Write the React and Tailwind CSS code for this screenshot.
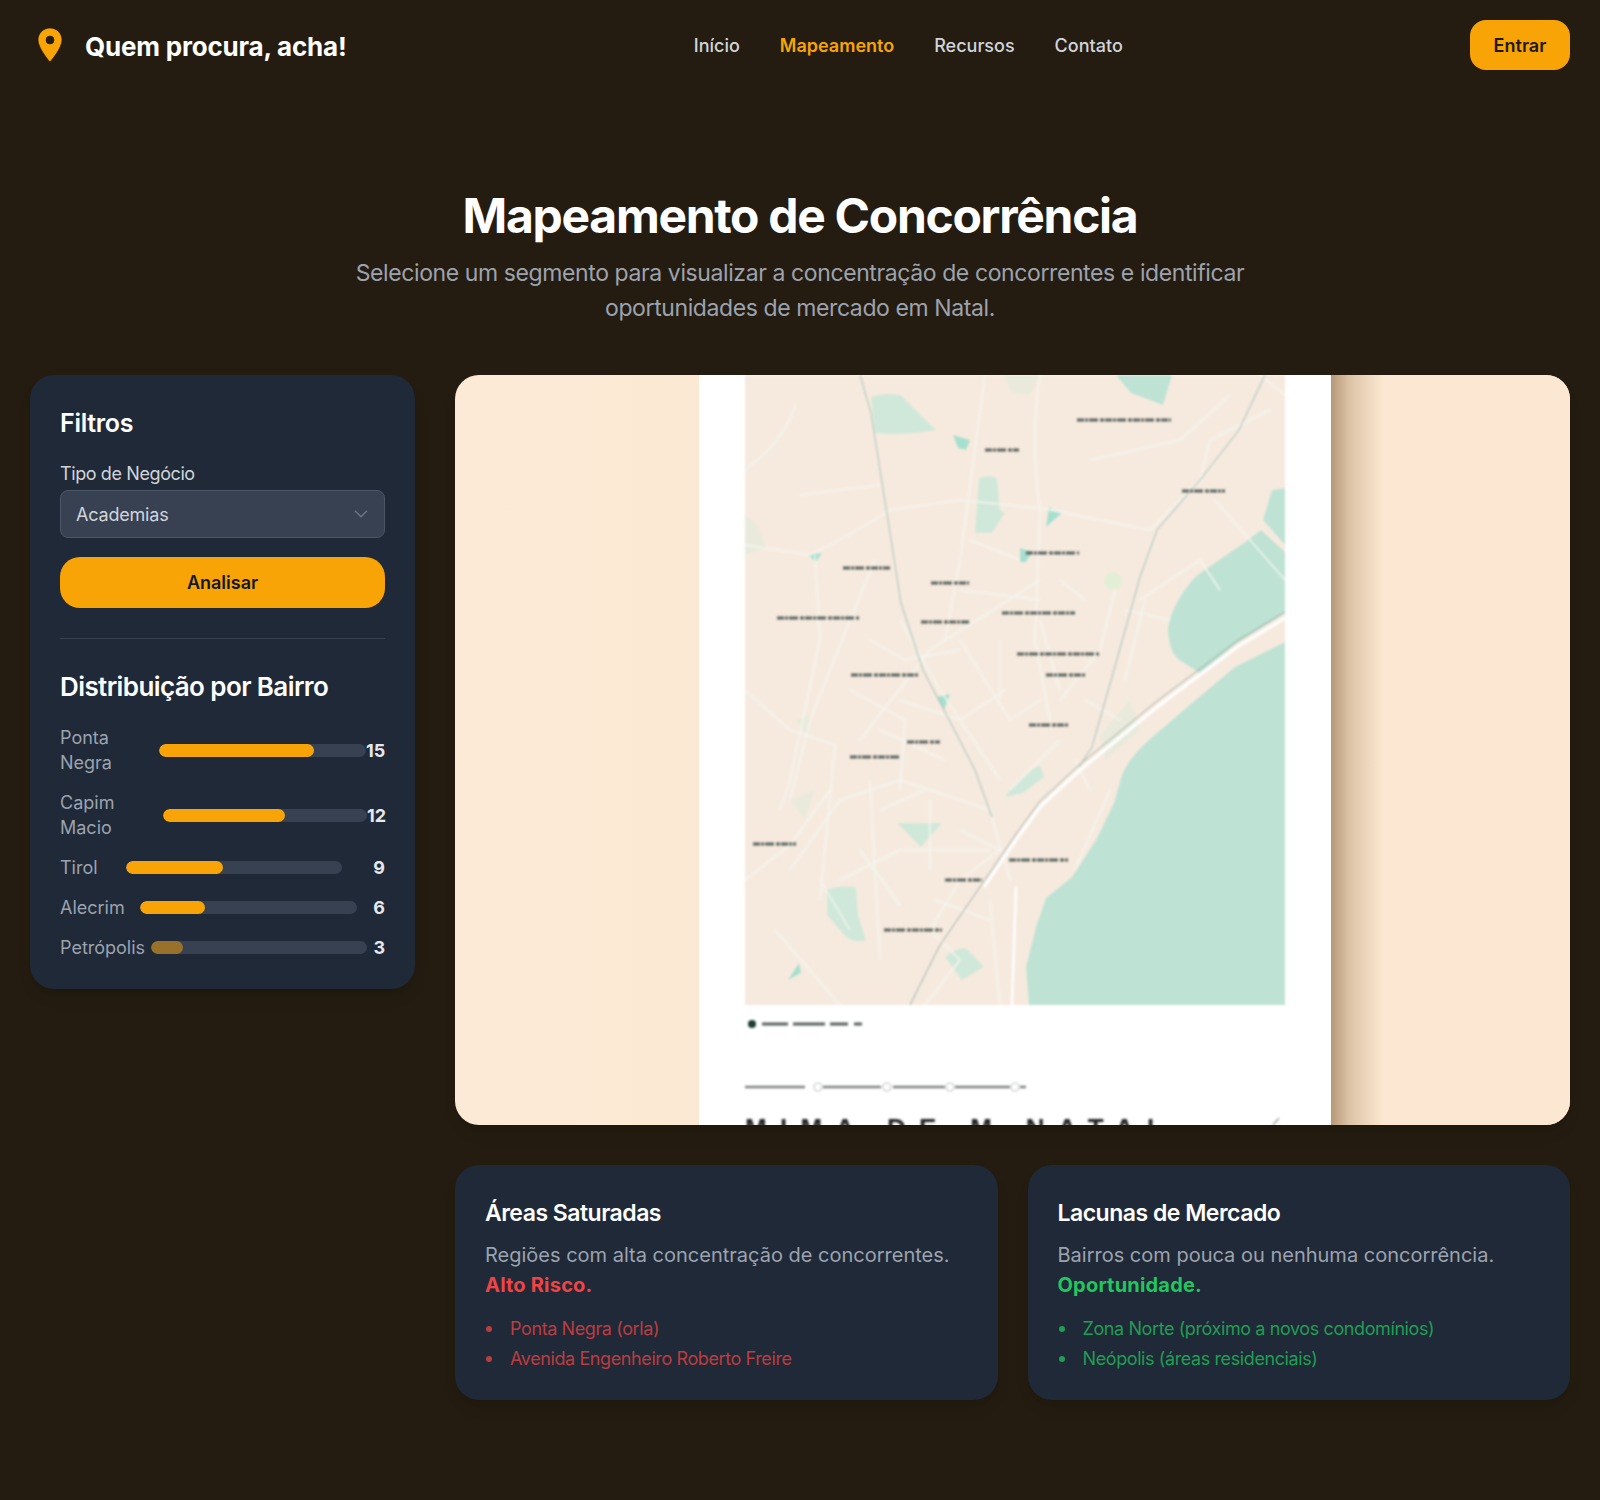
import { ChevronDown } from 'lucide-react'

const NAV = ['Início', 'Mapeamento', 'Recursos', 'Contato']

// widths are per row: the labels wrap differently and each bar starts after its label
const BAIRROS = [
  { name: 'Ponta Negra', count: 15, pct: 75, labelW: 'w-[93px]', barW: 'w-[207px]' },
  { name: 'Capim Macio', count: 12, pct: 60, labelW: 'w-[97px]', barW: 'w-[204px]' },
  { name: 'Tirol', count: 9, pct: 45, labelW: 'w-[60px]', barW: 'w-[216px]' },
  { name: 'Alecrim', count: 6, pct: 30, labelW: 'w-[74px]', barW: 'w-[217px]' },
  { name: 'Petrópolis', count: 3, pct: 15, labelW: 'w-[85px]', barW: 'w-[216px]', dim: true },
]

const WATER = [
  'M1116 375 L1172 375 L1163 405 L1131 393 Z',
  'M1285 488 L1272 490 L1263 520 L1285 545 Z',
  'M1261 530 L1244 543 L1209 567 Q1196 575 1190 583 Q1172 605 1168 627 Q1168 650 1179 660 L1200 673 L1237 643 L1285 613 L1285 552 Z',
  'M1285 642 L1235 667 L1192 703 L1157 733 Q1130 755 1122 775 L1114 803 L1096 840 L1072 877 L1046 898 L1036 927 L1026 967 L1029 1005 L1285 1005 Z',
]

const GREEN = [
  'M871 397 Q885 392 901 395 Q920 415 936 430 Q905 436 875 433 Z',
  'M979 478 Q990 474 997 478 L1000 510 L1005 513 L992 533 L975 533 Z',
  'M827 890 Q835 885 856 887 L858 915 L866 940 Q850 945 840 930 L827 915 Z',
  'M945 957 Q955 948 966 948 L984 967 L962 980 Z',
  'M1005 797 Q1020 775 1040 765 L1044 777 L1023 793 Z',
  'M897 823 L942 823 L921 847 Z',
]

const FAINT = [
  'M745 515 L758 525 L766 548 L745 555 Z',
  'M1100 735 L1130 700 L1140 730 L1105 760 Z',
  'M795 720 L810 715 L808 735 Z',
  'M790 800 L815 790 L805 820 Z',
  'M1005 375 L1040 375 L1030 395 L1010 392 Z',
]

const TEAL = [
  'M953 435 L970 440 L966 450 L958 448 Z',
  'M1049 507 L1062 513 L1046 527 Z',
  'M1020 548 L1032 552 L1026 562 L1020 562 Z',
  'M808 555 L822 553 L816 562 Z',
  'M937 697 L950 694 L944 710 Z',
  'M788 980 L799 963 L801 973 Z',
]

const WHITE_ROADS = [
  'M745 470 Q785 440 795 405 M800 495 L880 485 M745 545 L810 555 Q860 530 890 510 L960 500 L1055 510',
  'M1050 510 L1150 530 M1040 375 Q1030 440 1040 510 L1035 640 L1050 720 M985 375 L960 560 L945 640',
  'M875 560 L850 620 L810 720 L790 800 M815 555 L820 640 L790 780 L780 810 M1040 580 L930 650 L860 740',
  'M745 690 L790 730 L835 745 L820 900 M790 870 L840 800 L900 780 L960 800 L990 810 L1010 880',
  'M900 620 L940 690 L1000 780 M960 640 L1010 720 L1040 700 M1060 690 L1040 620 M1115 590 L1100 650 L1060 700',
  'M840 880 L900 850 L990 850 M870 780 L880 960 M745 880 L790 845 L830 790 M775 930 L840 1005 M850 930 L820 880',
  'M1150 530 L1200 480 L1210 440 L1270 410 M1090 460 L1180 440 L1230 395 M1215 500 L1285 580 M1285 395 L1260 375',
  'M1140 600 L1200 560 L1220 590 M1125 680 L1145 600 M1075 870 L1110 790 M960 880 L930 930 L960 960 L925 1005',
  'M870 640 L905 660 L960 650 M900 700 L960 720 L1005 690 M880 730 L945 760 M850 690 L905 720 L900 790',
  'M970 540 L1020 560 M960 590 L1040 600 M1000 640 L1000 700 M1060 740 L1010 790 M930 800 L930 870',
  'M960 830 L1000 850 L960 880 M880 810 L925 790 M860 850 L900 905 M990 900 L1000 1005 M935 900 L990 920',
  'M1085 600 L1060 580 M1120 720 L1085 700 M1125 610 L1170 620 M1090 790 L1075 760',
]

const LABELS = [
  [1077, 420, 94], [985, 450, 34], [1182, 491, 43], [1026, 553, 53], [843, 568, 47],
  [931, 583, 38], [777, 618, 82], [921, 622, 48], [1002, 613, 73], [1017, 654, 82],
  [1046, 675, 39], [851, 675, 67], [1029, 725, 39], [907, 742, 33], [850, 757, 51],
  [753, 844, 43], [1009, 860, 59], [945, 880, 37], [884, 930, 58],
]

function PinIcon() {
  return (
    <svg width="26" height="36" viewBox="-1 -1 26 36" aria-hidden="true">
      <path
        fillRule="evenodd"
        d="M12 0C5.4 0 0 5.3 0 11.8 0 20.5 12 34 12 34s12-13.5 12-22.2C24 5.3 18.6 0 12 0zm0 8a4 4 0 1 1 0 8 4 4 0 0 1 0-8z"
        fill="#f9a406"
        stroke="#171207"
        strokeWidth="0.6"
      />
    </svg>
  )
}

function MapPicture() {
  return (
    <svg viewBox="455 375 1115 750" className="block w-full h-full" role="img" aria-label="Mapa de Natal">
      <defs>
        <filter id="soft" x="-5%" y="-5%" width="110%" height="110%">
          <feGaussianBlur stdDeviation="1.2" />
        </filter>
        <filter id="softer" x="-5%" y="-20%" width="110%" height="140%">
          <feGaussianBlur stdDeviation="1.3" />
        </filter>
        <linearGradient id="leftBg" x1="0" x2="1" y1="0" y2="0">
          <stop offset="0" stopColor="#fcead6" />
          <stop offset="1" stopColor="#fce6cd" />
        </linearGradient>
        <linearGradient id="cast" x1="0" x2="1" y1="0" y2="0">
          <stop offset="0" stopColor="#b59877" />
          <stop offset="0.35" stopColor="#dcc3a6" />
          <stop offset="1" stopColor="#fbe7d0" />
        </linearGradient>
      </defs>

      <rect x="455" y="375" width="1115" height="750" fill="url(#leftBg)" />
      <rect x="1331" y="375" width="239" height="750" fill="#fce8d2" />
      <rect x="1331" y="375" width="52" height="750" fill="url(#cast)" />
      <rect x="699" y="375" width="632" height="750" fill="#ffffff" />

      <g filter="url(#soft)">
        <rect x="745" y="375" width="540" height="630" fill="#f6eadf" />
        {WATER.map((d) => <path key={d} d={d} fill="#bee2d4" />)}
        {GREEN.map((d) => <path key={d} d={d} fill="#d0e8d9" />)}
        {FAINT.map((d) => <path key={d} d={d} fill="#e9eadb" />)}
        {TEAL.map((d) => <path key={d} d={d} fill="#a5dfcd" />)}
        <circle cx="1113" cy="581" r="9" fill="#e2eed6" />
        <path d={WHITE_ROADS.join(' ')} fill="none" stroke="#f4f7f0" strokeWidth="1.4" />
        <path d="M1285 618 L1237 647 L1157 707 L1079 771 L1040 807 L1018 837 L984 887" fill="none" stroke="#ffffff" strokeWidth="3" />
        <path d="M1285 612 L1237 641 L1157 701 L1079 765 L1040 801 L1018 831 L984 881 L940 945 L910 1005" fill="none" stroke="#8fa7a0" strokeWidth="1" />
        <path d="M1016 887 L1012 1005" fill="none" stroke="#ffffff" strokeWidth="2.2" />
        <path d="M860 375 L871 413 L888 520 L901 603 L923 670 L958 737 L975 770 L992 817" fill="none" stroke="#aac3bb" strokeWidth="1.1" />
        <path d="M1265 375 L1239 430 L1200 480 L1157 530 L1140 577 L1114 670 L1092 747 L1079 767" fill="none" stroke="#aac3bb" strokeWidth="1.1" />
      </g>

      <g filter="url(#softer)" fill="none" stroke="#5a625d">
        {LABELS.map(([x, y, w]) => (
          <path key={`${x}-${y}`} d={`M${x} ${y}h${w}`} strokeWidth="3.2" strokeDasharray="7 1 3 1 9 2 4 1" />
        ))}
        <circle cx="752" cy="1024" r="4" fill="#1f3a33" stroke="none" />
        <path d="M762 1024h100" strokeWidth="3" strokeDasharray="26 5 32 5 18 6" />
        <path d="M745 1087h60M823 1087h58M893 1087h52M955 1087h55M1020 1087h6" strokeWidth="2.6" stroke="#7d8480" />
        <circle cx="818" cy="1087" r="4" stroke="#c4c4c4" strokeWidth="1.2" />
        <circle cx="887" cy="1087" r="4" stroke="#c4c4c4" strokeWidth="1.2" />
        <circle cx="950" cy="1087" r="4" stroke="#c4c4c4" strokeWidth="1.2" />
        <circle cx="1015" cy="1087" r="4" stroke="#c4c4c4" strokeWidth="1.2" />
        <path d="M1273 1125 L1279 1118" strokeWidth="1.2" stroke="#9a9a90" />
      </g>

      <text
        x="745"
        y="1137"
        fontFamily="Liberation Sans, sans-serif"
        fontSize="26"
        fontWeight="700"
        fill="#222222"
        textLength="418"
        lengthAdjust="spacing"
        filter="url(#soft)"
      >
        MIMA DE M NATAL
      </text>
    </svg>
  )
}

function BairroRow({ item }) {
  return (
    <div className="flex items-center">
      <span className={`${item.labelW} shrink-0 text-[18px] leading-[25px] text-[#9ca3af]`}>{item.name}</span>
      <div className={`${item.barW} ml-[6px] h-[13px] shrink-0 rounded-full bg-[#374151] overflow-hidden`}>
        <div
          className={`h-full rounded-full bg-[#f9a406] ${item.dim ? 'opacity-50' : ''}`}
          style={{ width: `${item.pct}%` }}
        />
      </div>
      <span className="ml-auto text-[18px] leading-[25px] font-bold text-[#e5e7eb]">{item.count}</span>
    </div>
  )
}

function InsightCard({ title, text, flag, flagClass, listClass, items }) {
  return (
    <div className="rounded-3xl bg-[#1f2937] p-[30px] h-[235px] shadow-lg">
      <h3 className="mt-[2px] text-[23px] leading-[32px] font-semibold text-white tracking-[-0.5px]">{title}</h3>
      <p className="mt-[11px] text-[20px] leading-[30px] text-[#9ca3af]">
        {text}
        <br />
        <span className={`font-bold tracking-[0.2px] ${flagClass}`}>{flag}</span>
      </p>
      <ul className={`mt-[14px] text-[18px] leading-[30px] tracking-[-0.4px] ${listClass}`}>
        {items.map((it) => (
          <li key={it} className="flex items-center">
            <span className="ml-[1px] mr-[18px] h-[6px] w-[6px] shrink-0 rounded-full bg-current" />
            {it}
          </li>
        ))}
      </ul>
    </div>
  )
}

export default function App() {
  return (
    <div className="min-h-[1500px] bg-[#241c10] font-['Inter',sans-serif]">
      {/* Header */}
      <header className="flex h-[90px] items-center justify-between px-[30px]">
        <div className="flex items-center gap-[22px] pl-[7px]">
          <PinIcon />
          <span className="pt-[2px] text-[26px] font-bold text-white tracking-[-0.2px]">Quem procura, acha!</span>
        </div>
        <nav className="flex items-center gap-10 text-[18px] font-medium text-[#d1d5db]">
          {NAV.map((n) => (
            <a key={n} href="#" className={n === 'Mapeamento' ? 'font-semibold text-[#f9a406]' : ''}>{n}</a>
          ))}
        </nav>
        <button className="h-[50px] w-[100px] rounded-2xl bg-[#f9a406] text-[18px] font-semibold text-[#1e1a12]">
          Entrar
        </button>
      </header>

      {/* Title */}
      <section className="mt-[96px] flex flex-col items-center text-center">
        <h1 className="text-[48px] leading-[60px] font-bold text-white tracking-[-1.3px]">Mapeamento de Concorrência</h1>
        <p className="mt-[10px] w-[940px] text-[23px] leading-[35px] text-[#9ca3af] tracking-[-0.4px]">
          Selecione um segmento para visualizar a concentração de concorrentes e identificar
          oportunidades de mercado em Natal.
        </p>
      </section>

      <main className="mt-[49px] grid grid-cols-[385px_1fr] items-start gap-10 px-[30px]">
        {/* Filters */}
        <aside className="rounded-3xl bg-[#1f2937] px-[30px] pt-[30px] pb-[29px] shadow-lg">
          <h2 className="text-[25px] leading-[36px] font-semibold text-white tracking-[-0.3px]">Filtros</h2>
          <label className="mt-[20px] block text-[18px] leading-[26px] text-[#d1d5db] tracking-[-0.4px]">Tipo de Negócio</label>
          <div className="relative mt-[3px]">
            <select className="h-[48px] w-full appearance-none rounded-lg border border-[#4b5563] bg-[#374151] px-[15px] text-[18px] tracking-[-0.2px] text-[#d1d5db] outline-none">
              <option>Academias</option>
            </select>
            <ChevronDown className="absolute right-[13px] top-[13px] text-[#6b7280]" size={22} strokeWidth={1.8} />
          </div>
          <button className="mt-[19px] h-[51px] w-full rounded-[20px] bg-[#f9a406] text-[18px] font-semibold text-[#111827]">
            Analisar
          </button>
          <div className="mt-[30px] h-px bg-[#374151]" />
          <h2 className="mt-[30px] text-[26px] leading-[36px] font-semibold text-white tracking-[-0.6px]">Distribuição por Bairro</h2>
          <div className="mt-[20px] flex flex-col gap-[15px]">
            {BAIRROS.map((b) => <BairroRow key={b.name} item={b} />)}
          </div>
        </aside>

        {/* Map and findings */}
        <div>
          <div className="h-[750px] overflow-hidden rounded-3xl shadow-lg">
            <MapPicture />
          </div>
          <div className="mt-10 grid grid-cols-2 gap-[30px]">
            <InsightCard
              title="Áreas Saturadas"
              text="Regiões com alta concentração de concorrentes."
              flag="Alto Risco."
              flagClass="text-[#ef4444]"
              listClass="text-[#ef4444]/75"
              items={['Ponta Negra (orla)', 'Avenida Engenheiro Roberto Freire']}
            />
            <InsightCard
              title="Lacunas de Mercado"
              text="Bairros com pouca ou nenhuma concorrência."
              flag="Oportunidade."
              flagClass="text-[#22c55e]"
              listClass="text-[#22c55e]/75"
              items={['Zona Norte (próximo a novos condomínios)', 'Neópolis (áreas residenciais)']}
            />
          </div>
        </div>
      </main>
    </div>
  )
}
